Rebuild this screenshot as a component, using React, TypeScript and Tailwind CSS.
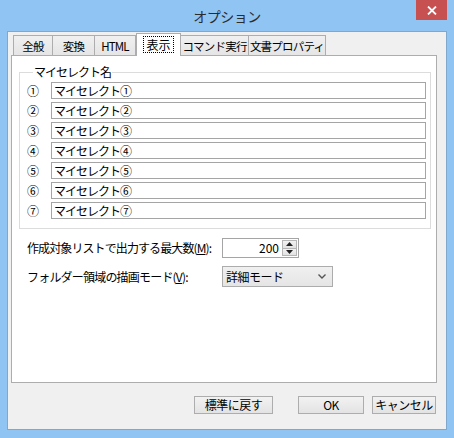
import React from 'react';

const FONT = { fontFamily: '"Noto Sans CJK JP", "Noto Sans", sans-serif' };

const TABS = [
  { label: '全般', w: 'w-[40px]' },
  { label: '変換', w: 'w-[43px]' },
  { label: 'HTML', w: 'w-[42px]' },
  { label: '表示', w: 'w-[45px]', active: true },
  { label: 'コマンド実行', w: 'w-[69px]' },
  { label: '文書プロパティ', w: 'w-[78px]' },
];

const MY_SELECTS = ['①', '②', '③', '④', '⑤', '⑥', '⑦'];

function Tri({ up }: { up?: boolean }) {
  return (
    <svg width="7" height="4" viewBox="0 0 7 4">
      <path d={up ? 'M0 4 L3.5 0 L7 4 Z' : 'M0 0 L3.5 4 L7 0 Z'} fill="#222" />
    </svg>
  );
}

function Button({ children, w }: { children: React.ReactNode; w: string }) {
  return (
    <button className={`${w} h-[18px] border border-[#adadad] bg-gradient-to-b from-[#f2f2f2] to-[#e3e3e3] text-[12px] leading-[16px] text-black tracking-[-0.5px]`}>
      {children}
    </button>
  );
}

export default function App() {
  return (
    <div className="w-[454px] h-[438px] bg-[#8fc4f3] flex flex-col text-[12px] text-black whitespace-nowrap" style={FONT}>
      {/* Title bar */}
      <div className="relative h-[31px] flex items-center justify-center">
        <span className="text-[14px] text-[#2b2b2b] mt-[1px] tracking-[-0.5px]">オプション</span>
        <div className="absolute right-[7px] top-0 w-[31px] h-[20px] bg-[#c75050] flex items-center justify-center">
          <svg width="10" height="9" viewBox="0 0 10 9">
            <path d="M1 0.5 L9 8.5 M9 0.5 L1 8.5" stroke="#fff" strokeWidth="1.8" />
          </svg>
        </div>
      </div>

      {/* Client area */}
      <div className="mx-[7px] mb-[8px] flex-1 border border-[#7fa8cc] bg-[#f0f0f0] flex flex-col">
        {/* Tabs */}
        <div className="h-[23px] pl-[5px] flex items-end relative z-10">
          {TABS.map((t) =>
            t.active ? (
              <div
                key={t.label}
                className={`${t.w} h-[23px] -mb-[1px] bg-white border border-b-0 border-[#adadad] flex items-start justify-center pt-[2px]`}
              >
                <span className="border border-dotted border-black px-[2px] leading-[15px]">{t.label}</span>
              </div>
            ) : (
              <div
                key={t.label}
                className={`${t.w} h-[20px] bg-gradient-to-b from-[#f0f0f0] to-[#e5e5e5] border border-b-0 border-[#adadad] flex items-center justify-center text-[11.5px] leading-[16px] tracking-[-0.8px] -ml-[1px] first:ml-0`}
              >
                {t.label}
              </div>
            )
          )}
        </div>

        {/* Panel */}
        <div className="ml-[3px] w-[426px] h-[328px] bg-white border border-[#adadad] flex flex-col">
          <fieldset className="mt-[9px] ml-[7px] mr-[5px] border border-[#dcdcdc] pl-[7px] pr-[4px] pt-[3px] pb-[9px]">
            <legend className="ml-[6px] px-[1px] leading-[14px] tracking-[-1px]">マイセレクト名</legend>
            <div className="flex flex-col gap-[3px]">
              {MY_SELECTS.map((n) => (
                <div key={n} className="flex items-center h-[17px]">
                  <span className="w-[24px] leading-[17px]">{n}</span>
                  <div className="flex-1 h-[17px] border border-[#a5a5a5] pl-[2px] leading-[15px] bg-white tracking-[-1px]">
                    マイセレクト{n}
                  </div>
                </div>
              ))}
            </div>
          </fieldset>

          <div className="mt-[9px] pl-[15px] flex items-center h-[20px]">
            <span className="w-[195px] tracking-[-0.9px]">
              作成対象リストで出力する最大数(<span className="underline">M</span>):
            </span>
            <div className="w-[77px] h-[20px] border border-[#a5a5a5] flex items-center">
              <span className="flex-1 text-right pr-[3px] leading-[16px]">200</span>
              <div className="w-[15px] h-[16px] mr-[1px] flex flex-col border border-[#b5b5b5]">
                <div className="flex-1 flex items-center justify-center bg-gradient-to-b from-[#f2f2f2] to-[#e2e2e2] border-b border-[#b5b5b5]">
                  <Tri up />
                </div>
                <div className="flex-1 flex items-center justify-center bg-gradient-to-b from-[#f2f2f2] to-[#e2e2e2]">
                  <Tri />
                </div>
              </div>
            </div>
          </div>

          <div className="mt-[8px] pl-[15px] flex items-center h-[21px]">
            <span className="w-[195px] tracking-[-0.8px]">
              フォルダー領域の描画モード(<span className="underline">V</span>):
            </span>
            <div className="w-[111px] h-[21px] border border-[#acacac] bg-gradient-to-b from-[#f0f0f0] to-[#e5e5e5] flex items-center pl-[3px] pr-[6px]">
              <span className="flex-1 leading-[16px] tracking-[-0.5px]">詳細モード</span>
              <svg width="8" height="5" viewBox="0 0 8 5">
                <path d="M0.5 0.5 L4 4 L7.5 0.5" stroke="#555" strokeWidth="1.4" fill="none" />
              </svg>
            </div>
          </div>
        </div>

        {/* Buttons */}
        <div className="mt-[13px] pr-[10px] flex justify-end items-center">
          <Button w="w-[79px]">標準に戻す</Button>
          <div className="ml-[25px]">
            <Button w="w-[66px]">OK</Button>
          </div>
          <div className="ml-[8px]">
            <Button w="w-[64px]">キャンセル</Button>
          </div>
        </div>
      </div>
    </div>
  );
}
